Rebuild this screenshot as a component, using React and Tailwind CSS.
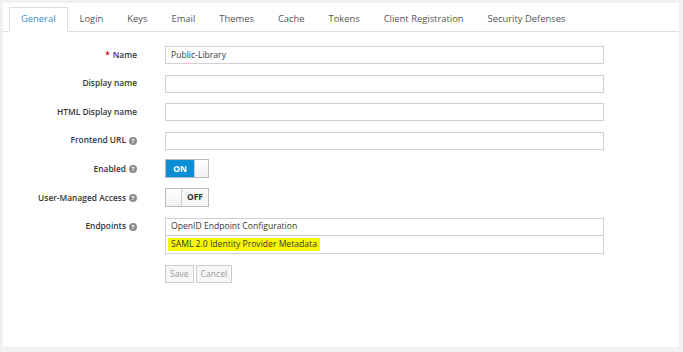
import React from 'react';

const tabs = ['General', 'Login', 'Keys', 'Email', 'Themes', 'Cache', 'Tokens', 'Client Registration', 'Security Defenses'];

const Help = () => (
    <span className="inline-flex items-center justify-center w-[8px] h-[8px] ml-[3px] rounded-full bg-[#8b8d8f] text-white text-[6px] font-bold leading-none">?</span>
);

const Row = ({ label, required, help, children, className = '' }) => (
    <div className={`flex items-start ${className}`}>
        <label className="w-[134px] shrink-0 flex items-center justify-end h-[18px] text-[8.4px] font-semibold text-[#363636]">
            {required && <span className="text-[#c00] mr-[3px]">*</span>}
            {label}
            {help && <Help />}
        </label>
        <div className="ml-[28px] w-[439px]">{children}</div>
    </div>
);

const TextInput = ({ value, className = '' }) => (
    <div className={`h-[18px] border border-[#d1d1d1] bg-white px-[5px] flex items-center text-[8.6px] text-[#363636] ${className}`}>
        {value}
    </div>
);

export default function App() {
    return (
        <div className="w-[683px] h-[352px] bg-[#f1f1f1] pt-[3px] pl-[3px]" style={{ fontFamily: '"Open Sans", "Noto Sans", sans-serif' }}>
            <div className="w-[676px] h-[344px] bg-white">
                {/* Tabs */}
                <ul className="flex pl-[6px] pt-[4px] border-b border-[#ddd] h-[29px]">
                    {tabs.map((t, i) => (
                        <li
                            key={t}
                            className={
                                i === 0
                                    ? 'px-[11px] h-[25px] flex items-center border border-[#ddd] border-b-white -mb-px bg-white text-[9.4px] text-[#3a8bd0]'
                                    : 'px-[11px] h-[25px] flex items-center border border-transparent text-[9.4px] text-[#555]'
                            }
                        >
                            {t}
                        </li>
                    ))}
                </ul>

                {/* Form */}
                <div className="pt-[14px] flex flex-col gap-[10.6px]">
                    <Row label="Name" required>
                        <TextInput value="Public-Library" />
                    </Row>
                    <Row label="Display name">
                        <TextInput />
                    </Row>
                    <Row label="HTML Display name">
                        <TextInput />
                    </Row>
                    <Row label="Frontend URL" help>
                        <TextInput />
                    </Row>
                    <Row label="Enabled" help>
                        <div className="flex w-[44px] h-[19px] border border-[#bbb] -mt-[1px]">
                            <div className="w-[28px] bg-[#0a8fd6] text-white text-[8.5px] font-bold flex items-center justify-center">ON</div>
                            <div className="flex-1 bg-gradient-to-b from-white to-[#f1f1f1] border-l border-[#ccc]"></div>
                        </div>
                    </Row>
                    <Row label="User-Managed Access" help>
                        <div className="flex w-[44px] h-[19px] border border-[#bbb] -mt-[1px]">
                            <div className="w-[16px] bg-gradient-to-b from-white to-[#f1f1f1] border-r border-[#ccc]"></div>
                            <div className="flex-1 bg-[#f7f7f7] text-[#333] text-[8.5px] font-bold flex items-center justify-center">OFF</div>
                        </div>
                    </Row>
                    <Row label="Endpoints" help>
                        <TextInput value="OpenID Endpoint Configuration" />
                        <TextInput
                            className="border-t-0"
                            value={<span className="bg-[#f8f800] px-[3px] -ml-[3px] leading-[13px]">SAML 2.0 Identity Provider Metadata</span>}
                        />
                    </Row>
                    <div className="flex gap-[2px] ml-[162px] mt-[1px]">
                        <div className="h-[18px] px-[4px] border border-[#ccc] bg-[#f7f7f7] text-[8.6px] text-[#999] flex items-center">Save</div>
                        <div className="h-[18px] px-[4px] border border-[#ccc] bg-[#f7f7f7] text-[8.6px] text-[#999] flex items-center">Cancel</div>
                    </div>
                </div>
            </div>
        </div>
    );
}
